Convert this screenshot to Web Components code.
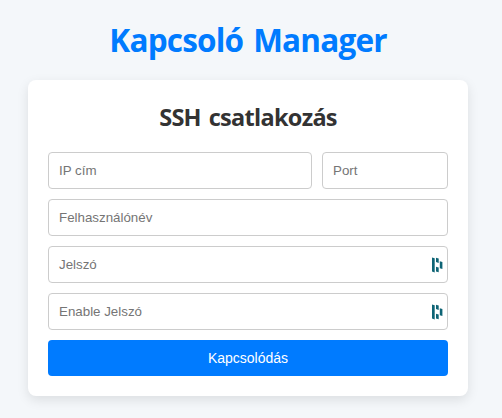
<!DOCTYPE html>
<html lang="hu"><head><meta charset="utf-8"><title>Kapcsoló Manager</title>
<style>html{background:#f4f7fa}body{margin:0;min-height:418px;overflow:hidden;background:#f4f7fa;font-family:"Open Sans","Noto Sans",sans-serif}</style></head>
<body><manager-app></manager-app>
<script>
class TextField extends HTMLElement{
  constructor(){super();
    const icon=this.hasAttribute('manager')?'<svg width="12" height="16" viewBox="0 0 12 16" fill="#0e6475"><path d="M1 .4l2.7.8v14.2l-2.7-.8zM5 .7l2.7.9v4.3l-2.7-.8zM5 9.8l2.7.8v4.6l-2.7-.8zM8.8 4.3l2.6.8v7l-2.6-.8z"/></svg>':'';
    this.attachShadow({mode:'open'}).innerHTML=`<style>
:host{display:flex;align-items:center;box-sizing:border-box;height:37px;border:1px solid #ccc;border-radius:4px;background:#fff;padding:0 4px 0 10px;font:13.333px "Liberation Sans",Arial,sans-serif;color:#757575}
span{flex:1;white-space:nowrap}svg{display:block}
</style><span><slot></slot></span>${icon}`;}
}
customElements.define('text-field',TextField);
class ConnectButton extends HTMLElement{
  constructor(){super();this.attachShadow({mode:'open'}).innerHTML=`<style>
:host{display:block}button{display:block;width:100%;height:36px;border:0;border-radius:4px;background:#007bff;color:#fff;padding:0;font:14px "Liberation Sans",Arial,sans-serif}
</style><button><slot></slot></button>`;}
}
customElements.define('connect-button',ConnectButton);
class ManagerApp extends HTMLElement{
  constructor(){super();this.attachShadow({mode:'open'}).innerHTML=`<style>
:host{display:block;padding:20px 34px 0 28px}
h1{margin:0;height:60px;line-height:40px;font-size:31.5px;font-weight:700;letter-spacing:-.8px;word-spacing:2.5px;color:#007bff;text-align:center;white-space:nowrap}
section{box-sizing:border-box;height:316px;background:#fff;border-radius:8px;box-shadow:0 4px 12px rgba(0,0,0,.1);padding:20px}
h2{margin:0;height:52px;line-height:34px;font-size:23.5px;font-weight:700;letter-spacing:-.72px;word-spacing:2.5px;color:#333;text-align:center;white-space:nowrap}
form{display:grid;gap:10px}.row{display:grid;grid-template-columns:264px 126px;gap:10px}
</style><h1>Kapcsoló Manager</h1><section><h2>SSH csatlakozás</h2><form><div class="row"><text-field>IP cím</text-field><text-field>Port</text-field></div><text-field>Felhasználónév</text-field><text-field manager>Jelszó</text-field><text-field manager>Enable Jelszó</text-field><connect-button>Kapcsolódás</connect-button></form></section>`;}
}
customElements.define('manager-app',ManagerApp);
</script></body></html>
